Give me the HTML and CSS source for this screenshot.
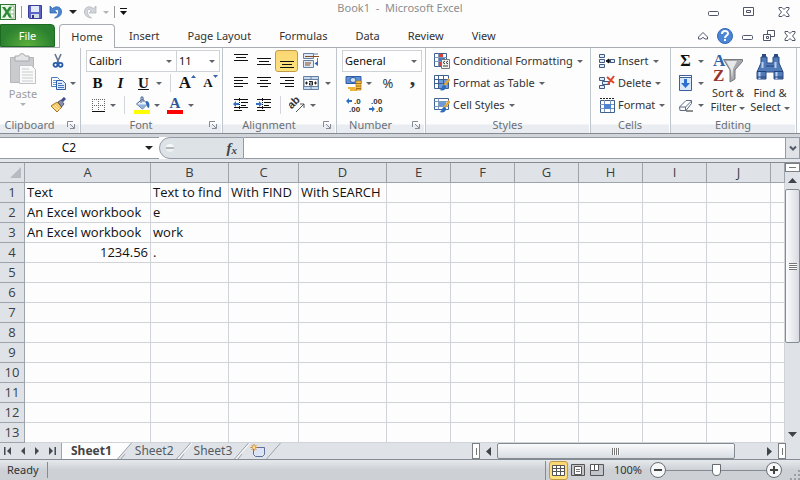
FILE: index.html
```html
<!DOCTYPE html>
<html lang="en">
<head>
<meta charset="utf-8">
<title>Book1 - Microsoft Excel</title>
<link rel="stylesheet" href="styles.css">
</head>
<body>
<header class="titlebar">
  <div class="quick">
    <svg class="logo" width="16" height="16" viewBox="0 0 16 16"><rect x=".5" y=".5" width="15" height="15" fill="#eaf5e6" stroke="#2c7a33"/><path d="M10 2h4v12h-4zM10 6h4M10 10h4" fill="#fff" stroke="#8abb85"/><path d="M2 3h3l2 3 2-3h3L8.500 8l3.500 5.500H9L7 10l-2 3.500H2L5.500 8z" fill="#2b8a35"/></svg>
    <i class="bar"></i>
    <button aria-label="Save"><svg width="16" height="16" viewBox="0 0 16 16"><path d="M1.500 1.500h13v13h-12l-1-1z" fill="#5b64c4" stroke="#3b3f9b"/><path d="M4 2h8v6H4z" fill="#e3eafa"/><path d="M4 10h8v4H4z" fill="#d6dbe8"/><path d="M5 11h2v3H5z" fill="#30357e"/></svg></button>
    <button aria-label="Undo"><svg width="16" height="16" viewBox="0 0 16 16"><path d="M2 2v7h7L6.800 6.700C9 4.500 11 5.500 10.500 8.500 10.200 11 8.500 12.500 6.500 14 12 13.500 14 10 13.500 7 13 2.500 8 1.500 4.500 4.500z" fill="#4a86d0" stroke="#2c60ab" stroke-width=".7"/></svg></button>
    <i class="caret black"></i>
    <button aria-label="Redo" disabled><svg width="16" height="16" viewBox="0 0 16 16"><path d="M14 2v7H7l2.200-2.300C7 4.500 5 5.500 5.500 8.500 5.800 11 7.500 12.500 9.500 14 4 13.500 2 10 2.500 7 3 2.500 8 1.500 11.500 4.500z" fill="#d2d5da" stroke="#aeb2b8" stroke-width=".7"/></svg></button>
    <i class="caret pale"></i>
    <i class="bar"></i>
    <button class="more" aria-label="Customize toolbar"><svg width="8" height="8" viewBox="0 0 8 8"><path d="M0 0h7v1H0zM0 3h7L3.500 7z" fill="#111"/></svg></button>
  </div>
  <h1>Book1&nbsp; -&nbsp; Microsoft Excel</h1>
  <div class="wincontrols">
    <button aria-label="Minimize"><svg width="12" height="12" viewBox="0 0 12 12"><rect x=".5" y="5.500" width="10" height="4" rx="1" fill="#fff" stroke="#50556a"/></svg></button>
    <button aria-label="Maximize"><svg width="12" height="12" viewBox="0 0 12 12"><path d="M.5 1.500h10v8H.5zM3.500 4.500h4v2h-4z" fill="#fff" stroke="#50556a"/></svg></button>
    <button aria-label="Close"><svg width="12" height="12" viewBox="0 0 12 12"><use href="#close"/></svg></button>
  </div>
</header>

<nav class="tabs">
  <button class="file">File</button>
  <button class="active">Home</button>
  <button>Insert</button>
  <button>Page Layout</button>
  <button>Formulas</button>
  <button>Data</button>
  <button>Review</button>
  <button>View</button>
  <div class="bookcontrols">
    <button aria-label="Collapse ribbon"><svg width="10" height="10" viewBox="0 0 10 10"><path d="M.5 6 5 1.500 9.500 6v2H7L5 6.300 3 8H.5z" fill="#fff" stroke="#50556a"/></svg></button>
    <button aria-label="Help"><svg width="16" height="16" viewBox="0 0 16 16"><circle cx="8" cy="8" r="7.500" fill="#4a86d6" stroke="#3267b5"/><path d="M5 6c0-4 6-4 6-.5C11 7.500 8 7.500 8 10" fill="none" stroke="#fff" stroke-width="2"/><path d="M7 11h2v2H7z" fill="#fff"/></svg></button>
    <button aria-label="Minimize workbook"><svg width="12" height="12" viewBox="0 0 12 12"><rect x=".5" y="5.500" width="10" height="4" rx="1" fill="#fff" stroke="#50556a"/></svg></button>
    <button aria-label="Restore workbook"><svg width="12" height="12" viewBox="0 0 12 12"><path d="M4.500.5h7v6h-7z" fill="#fff" stroke="#50556a"/><path d="M.5 4.500h7v6h-7zM3.500 6.500h2v2h-2z" fill="#fff" stroke="#50556a"/></svg></button>
    <button aria-label="Close workbook"><svg width="12" height="12" viewBox="0 0 12 12"><path id="close" d="M1 1.500h3l2 2 2-2h3v1.500L8.500 6 11 9v1.500H8l-2-2-2 2H1V9l2.500-3L1 3z" fill="#fff" stroke="#50556a"/></svg></button>
  </div>
</nav>

<main class="ribbon">
  <section class="group">
    <div class="body clip">
      <button class="big" disabled><svg width="28" height="32" viewBox="0 0 28 32"><path d="M1.500 4.500h23v25h-23z" fill="#c9cbcf" stroke="#b4b6ba"/><path d="M6 3h4c0-3 6-3 6 0h4v5H6z" fill="#e4e5e7" stroke="#a7a9ad"/><path d="M10.500 12.500h12l4 4v14h-16z" fill="#fafafa" stroke="#c0c2c6"/><path d="M13 16h7M13 19h11M13 22h11M13 25h11M13 28h11" stroke="#c8cacd"/></svg><span>Paste</span><i class="caret pale"></i></button>
      <div class="rows">
        <div class="row"><button class="icon" aria-label="Cut"><svg width="16" height="16" viewBox="0 0 16 16"><path d="M5 1l4 9M11 1 7 10" stroke="#66748c" stroke-width="1.600" fill="none"/><circle cx="5.500" cy="11.800" r="2" fill="none" stroke="#285dab" stroke-width="1.800"/><circle cx="10.500" cy="11.800" r="2" fill="none" stroke="#285dab" stroke-width="1.800"/></svg></button></div>
        <div class="row"><button class="icon" aria-label="Copy"><svg width="16" height="16" viewBox="0 0 16 16"><path d="M1.500 2.500h6l2 2v7h-8z" fill="#fff" stroke="#4c7cc0"/><path d="M3 5.500h5M3 7.500h4M3 9.500h4" stroke="#6c9ad4"/><path d="M6.500 5.500h6l3 3v6h-9z" fill="#dce9fa" stroke="#2f5fac"/><path d="M8 8.500h4M8 10.500h6M8 12.500h6" stroke="#4477be"/></svg></button><i class="caret"></i></div>
        <div class="row"><button class="icon" aria-label="Format Painter"><svg width="16" height="16" viewBox="0 0 16 16"><path d="M1 9l6-4 5 5-5 5z" fill="#f2c868" stroke="#a87828"/><path d="M3 9.500l5 4M5 8l4.500 4.500" stroke="#fff0b8"/><path d="M8 5l3-2 3 4-2.500 3z" fill="#8b8fa6" stroke="#555b78"/><path d="M12 4l3-3" stroke="#3d4a90" stroke-width="3"/></svg></button></div>
      </div>
    </div>
    <h2>Clipboard<svg width="8" height="8"><use href="#launch"/></svg></h2>
  </section>

  <section class="group">
    <div class="body rows">
      <div class="row fields">
        <label class="combo fontname"><select aria-label="Font"><option>Calibri</option></select></label><label class="combo fontsize"><select aria-label="Font size"><option>11</option></select></label>
      </div>
      <div class="row"><button class="icon serif">B</button><button class="icon serif italic">I</button><button class="icon serif under">U</button><i class="caret"></i><i class="sep"></i><button class="icon serif grow" aria-label="Grow font">A<svg width="5" height="3"><path d="M0 3 2.500 0 5 3z" fill="#3a62a8"/></svg></button><button class="icon serif shrink" aria-label="Shrink font">A<svg width="5" height="3"><path d="M0 0h5L2.500 3z" fill="#3a62a8"/></svg></button></div>
      <div class="row"><button class="icon" aria-label="Borders"><svg width="16" height="16" viewBox="0 0 16 16"><path d="M2 2.500h13M2 8.500h13M2.500 2v11M8.500 2v11M14.500 2v11" stroke="#666" stroke-dasharray="1 1"/><path d="M2 14h13v1H2z" fill="#111"/></svg></button><i class="caret"></i><i class="sep"></i><button class="icon" aria-label="Fill color"><svg width="16" height="18" viewBox="0 0 16 18"><path d="M2.500 8l6-5 5 5-5 5z" fill="#e7eff9" stroke="#47638f"/><path d="M3 8.500h10l-5 4z" fill="#8fb3df"/><path d="M7 7V1h2v5" fill="none" stroke="#47638f"/><path d="M12 5c3 0 4 3 3 7-2 0-2-3-3-5z" fill="#2e65b4"/><path d="M0 14h16v4H0z" fill="#ff0"/></svg></button><i class="caret"></i><button class="icon fontcolor" aria-label="Font color">A</button><i class="caret"></i></div>
    </div>
    <h2>Font<svg width="8" height="8"><use href="#launch"/></svg></h2>
  </section>

  <section class="group">
    <div class="body rows align">
      <div class="row"><button class="icon" aria-label="Top align"><svg width="16" height="16" viewBox="0 0 16 16"><path d="M1 1.500h14M3 4.500h10M1 7.500h14" stroke="#111"/></svg></button><button class="icon" aria-label="Middle align"><svg width="16" height="16" viewBox="0 0 16 16"><path d="M1 5.500h14M3 8.500h10M1 11.500h14" stroke="#111"/></svg></button><button class="icon on" aria-label="Bottom align"><svg width="16" height="16" viewBox="0 0 16 16"><path d="M1 8.500h14M3 11.500h10M1 14.500h14" stroke="#111"/></svg></button><button class="icon wide" aria-label="Wrap text"><svg width="16" height="16" viewBox="0 0 16 16"><path d="M.5.500h10v5H.5z" fill="#dde8f5" stroke="#67809f"/><path d="M2 3.500h14" stroke="#8a4b20"/><path d="M.5 7.500h10v7H.5z" fill="#dde8f5" stroke="#67809f"/><path d="M2 10h6M2 12h5" stroke="#8a4b20"/><path d="M11 1h4M14.500 5v5" stroke="#67809f"/><path d="M11.500 10.500 15 8v5z" fill="#2c65b5"/></svg></button></div>
      <div class="row"><button class="icon" aria-label="Align left"><svg width="16" height="16" viewBox="0 0 16 16"><path d="M1 2.500h14M1 5.500h9M1 8.500h14M1 11.500h9" stroke="#111"/></svg></button><button class="icon" aria-label="Center"><svg width="16" height="16" viewBox="0 0 16 16"><path d="M1 2.500h14M4 5.500h8M1 8.500h14M4 11.500h8" stroke="#111"/></svg></button><button class="icon" aria-label="Align right"><svg width="16" height="16" viewBox="0 0 16 16"><path d="M1 2.500h14M6 5.500h9M1 8.500h14M6 11.500h9" stroke="#111"/></svg></button><button class="icon wide" aria-label="Merge and center"><svg width="16" height="16" viewBox="0 0 16 16"><path d="M.5 1.500h15v13H.5z" fill="#c5daf0" stroke="#67809f"/><path d="M8 1v13" stroke="#67809f"/><path d="M1 4.500h14v7H1z" fill="#fff" stroke="#67809f"/><path d="M2 8h3M11 8h3M3.500 6.500v3M12.500 6.500v3" stroke="#222"/><path d="M6 6.500h3.500v3.500H6.500V8h3" stroke="#222" fill="none"/></svg></button><i class="caret"></i></div>
      <div class="row"><button class="icon" aria-label="Decrease indent"><svg width="16" height="16" viewBox="0 0 16 16"><path d="M1 2.500h14M8 5.500h7M8 8.500h5M1 10.500h14M1 13.500h8" stroke="#111"/><path d="M6.500 1v14" stroke="#111" stroke-dasharray="1 1"/><path d="M0 7l3-3v2h3v2H3v2z" fill="#2f6fc6"/></svg></button><button class="icon" aria-label="Increase indent"><svg width="16" height="16" viewBox="0 0 16 16"><path d="M1 2.500h14M8 5.500h7M8 8.500h5M1 10.500h14M1 13.500h8" stroke="#111"/><path d="M6.500 1v14" stroke="#111" stroke-dasharray="1 1"/><path d="M6 7 3 4v2H0v2h3v2z" fill="#2f6fc6"/></svg></button><i class="sep"></i><button class="icon" aria-label="Orientation"><svg width="18" height="16" viewBox="0 0 18 16"><text x="1" y="9" transform="rotate(-45 6 9)" font-family="Liberation Sans" font-weight="bold" font-size="11" fill="#333">ab</text><path d="M7 15l8-8M15 11V7h-4" fill="none" stroke="#555"/></svg></button><i class="caret"></i></div>
    </div>
    <h2>Alignment<svg width="8" height="8"><use href="#launch"/></svg></h2>
  </section>

  <section class="group">
    <div class="body rows">
      <div class="row fields"><label class="combo numfmt"><select aria-label="Number format"><option>General</option></select></label></div>
      <div class="row"><button class="icon" aria-label="Accounting format"><svg width="18" height="16" viewBox="0 0 18 16"><path d="M1 1.500h15v7H1z" fill="#5e8fd2" stroke="#2d5ca3"/><ellipse cx="8" cy="5" rx="3" ry="2.500" fill="#d2e2f6" stroke="#2d5ca3"/><path d="M3 12h7v2H3zM5 14h7v2H5z" fill="#eeb53b"/><path d="M11 6h5v9h-5z" fill="#f5c64f" stroke="#b87916" stroke-width=".7"/><path d="M11 8.500h5M11 11h5M11 13.500h5" stroke="#a96c12"/></svg></button><i class="caret"></i><button class="icon percent">%</button><button class="icon comma">,</button></div>
      <div class="row"><button class="icon dec" aria-label="Increase decimal"><svg width="16" height="16" viewBox="0 0 16 16"><path d="M0 4l3-3v2h3v2H3v2z" fill="#2f6fc6"/><text x="8" y="7">.0</text><text x="3" y="15">.00</text></svg></button><button class="icon dec" aria-label="Decrease decimal"><svg width="16" height="16" viewBox="0 0 16 16"><path d="M6 12 3 9v2H0v2h3v2z" fill="#2f6fc6"/><text x="2" y="7">.00</text><text x="7" y="15">.0</text></svg></button></div>
    </div>
    <h2>Number<svg width="8" height="8"><path id="launch" d="M.5 6V.500H6M3 3l4 4M7.500 3v4.500H3" fill="none" stroke="#858b94"/></svg></h2>
  </section>

  <section class="group">
    <div class="body rows">
      <button class="row text"><svg width="16" height="16" viewBox="0 0 16 16"><path d="M.5.500h12v13H.5z" fill="#fff" stroke="#3f5f91"/><path d="M4.500.5v13M.5 4.500h12M.5 8.500h12" stroke="#7f99bd"/><path d="M5 1h4v3H5zM5 9h3v4H5z" fill="#d94334"/><path d="M5 5h6v3H5z" fill="#4876bd"/><path d="M7.500 6.500h8v9h-8z" fill="#f7f7f7" stroke="#777"/><path d="M11 8l-2 1.500 2 1.500M14 8l-2 1.500L14 11M9 13h5" fill="none" stroke="#333"/></svg>Conditional Formatting<i class="caret"></i></button>
      <button class="row text"><svg width="16" height="16" viewBox="0 0 16 16"><path d="M.5.500h14v13H.5z" fill="#fff" stroke="#3f5f91"/><path d="M4 4h10v9H4z" fill="#6d9ad8"/><path d="M4.500.5v13M9.500.5v13M.5 4.500h14M.5 8.500h14" stroke="#3f5f91"/><path d="M15.500 4 10 11" stroke="#e5a838" stroke-width="2.500"/><path d="M10.500 10c-3 0-2 4-5 5 4 1.500 7-1 6.500-4z" fill="#2d6ac0"/></svg>Format as Table<i class="caret"></i></button>
      <button class="row text"><svg width="16" height="16" viewBox="0 0 16 16"><path d="M.5 1.500h14v11H.5z" fill="#fff" stroke="#3f5f91"/><path d="M4 5h8v4H4z" fill="#6d9ad8"/><path d="M.5 4.500h14M.5 9.500h14M4.500 1.500v11" stroke="#7f99bd"/><path d="M15.500 4 10 11" stroke="#e5a838" stroke-width="2.500"/><path d="M10.500 10c-3 0-2 4-5 5 4 1.500 7-1 6.500-4z" fill="#2d6ac0"/></svg>Cell Styles<i class="caret"></i></button>
    </div>
    <h2>Styles</h2>
  </section>

  <section class="group">
    <div class="body rows">
      <button class="row text"><svg width="16" height="16" viewBox="0 0 16 16"><path d="M.5 1.500h5v3h-5zM.5 6.500h5v3h-5zM.5 11.500h5v3h-5zM11 6.500h4.500v3H11z" fill="#e3edf9" stroke="#405b84"/><path d="M7 8l3-2v4zM10 8h2" fill="#111" stroke="#111"/></svg>Insert<i class="caret"></i></button>
      <button class="row text"><svg width="16" height="16" viewBox="0 0 16 16"><path d="M.5 2.500h5v3h-5zM.5 10.500h5v3h-5zM3.500 6.500h7v3h-7z" fill="#e3edf9" stroke="#405b84"/><path d="M8 2l7 6M15 1 9 9" stroke="#e0452b" stroke-width="2"/></svg>Delete<i class="caret"></i></button>
      <button class="row text"><svg width="16" height="16" viewBox="0 0 16 16"><path d="M1.500 3.500h14v12h-14z" fill="#fff" stroke="#3f5f91"/><path d="M5.500 3v12M11.500 3v12M1 7.500h14M1 11.500h14" stroke="#7f99bd"/><path d="M5 7h7v5H5z" fill="#4d85d4"/><path d="M1 1.500h14" stroke="#222" stroke-dasharray="2 1"/></svg>Format<i class="caret"></i></button>
    </div>
    <h2>Cells</h2>
  </section>

  <section class="group">
    <div class="body edit">
      <div class="rows">
        <div class="row"><button class="icon sigma" aria-label="AutoSum">Σ</button><i class="caret"></i></div>
        <div class="row"><button class="icon" aria-label="Fill"><svg width="14" height="16" viewBox="0 0 14 16"><path d="M.5.500h12v15H.5z" fill="#d9e8fb" stroke="#3c5f98"/><path d="M.5.500h12v2H.5z" fill="#fff" stroke="#3c5f98"/><path d="M5 4h3v4h3l-4.500 5L2 8h3z" fill="#2d6fd0"/></svg></button><i class="caret"></i></div>
        <div class="row"><button class="icon" aria-label="Clear"><svg width="16" height="14" viewBox="0 0 16 14"><path d="M1.500 9 8 2.500h5.500v3L8 12.500H2z" fill="#fff" stroke="#5b6b8a"/><path d="M2 9h5.500l6-6M7.500 9v3.500" fill="none" stroke="#5b6b8a"/><path d="M8 13h7" stroke="#222"/></svg></button><i class="caret"></i></div>
      </div>
      <button class="big"><svg width="30" height="30" viewBox="0 0 30 30"><path d="M10.500 6.500h19v2L22 17v9l-5 3V17z" fill="#a4a7ab" stroke="#77797d"/><path d="M13 8h11l-4 8-1 10-1-9z" fill="#e7e8e9"/><text x="0" y="13" class="glyph" fill="#2f62ac">A</text><text x="0" y="28" class="glyph" fill="#97352e">Z</text></svg><span>Sort &amp;<br>Filter <i class="caret"></i></span></button>
      <button class="big"><svg width="28" height="30" viewBox="0 0 28 30"><path d="M5 4h6v6h6V4h6v6l4 9v7h-9v-7h-8v7H1v-7l4-9z" fill="#517ab8" stroke="#2a4a82"/><path d="M6.500 9v6M19.500 9v6M3.500 19v7M20.500 19v7" stroke="#b7d0f0" stroke-width="2"/><path d="M1 18.500h9M18 18.500h9M10 13h8M1 24h9M18 24h9" stroke="#24417a"/><path d="M6 2.500h4M18 2.500h4" stroke="#2a4a82" stroke-width="3"/></svg><span>Find &amp;<br>Select <i class="caret"></i></span></button>
    </div>
    <h2>Editing</h2>
  </section>
</main>

<div class="formulabar">
  <label class="namebox"><input aria-label="Name box" value="C2"><i class="caret black"></i></label>
  <div class="fx"><i class="knob"></i><button aria-label="Insert function">f<small>x</small></button></div>
  <input class="formula" aria-label="Formula">
  <button class="expand" aria-label="Expand formula bar"><svg width="8" height="7" viewBox="0 0 8 7"><path d="M1 1.500 4 4.500l3-3" fill="none" stroke="#555b66" stroke-width="2"/></svg></button>
</div>

<div class="workspace">
  <div class="sheet">
    <table>
      <colgroup><col class="col-head"><col class="col-a"><col class="col-b"><col class="col-c"><col class="col-d"><col class="col-std"><col class="col-std"><col class="col-std"><col class="col-std"><col class="col-std"><col class="col-std"><col></colgroup>
      <thead><tr><th><svg class="corner" width="11" height="11"><path d="M11 0v11H0z" fill="#b6bbc1"/></svg></th><th>A</th><th>B</th><th>C</th><th>D</th><th>E</th><th>F</th><th>G</th><th>H</th><th>I</th><th>J</th><th></th></tr></thead>
      <tbody id="rows"></tbody>
    </table>
  </div>
  <div class="vscroll">
    <button class="splitter" aria-label="Split"></button>
    <button class="arrow" aria-label="Scroll up"><svg width="9" height="5"><path d="M0 5 4.500 0 9 5z" fill="#3f434a"/></svg></button>
    <div class="thumb"><i></i></div>
    <button class="arrow end" aria-label="Scroll down"><svg width="9" height="5"><path d="M0 0h9L4.500 5z" fill="#3f434a"/></svg></button>
  </div>
</div>

<div class="sheetbar">
  <div class="sheetnav">
    <button aria-label="First sheet"><svg width="8" height="8"><path d="M0 0h1.500v8H0zM7 0v8L3 4z" fill="#454a52"/></svg></button>
    <button aria-label="Previous sheet"><svg width="8" height="8"><path d="M6 0v8L2 4z" fill="#454a52"/></svg></button>
    <button aria-label="Next sheet"><svg width="8" height="8"><path d="M2 0v8l4-4z" fill="#454a52"/></svg></button>
    <button aria-label="Last sheet"><svg width="8" height="8"><path d="M6.500 0H8v8H6.500zM1 0v8l4-4z" fill="#454a52"/></svg></button>
  </div>
  <button class="sheettab current">Sheet1</button>
  <svg class="slant" width="16" height="16"><path d="M0 0h14L0 16z" fill="#fdfdfd"/><path d="M14.500 0 .500 16M4 16l4-5" stroke="#9da3ab" fill="none"/></svg>
  <button class="sheettab">Sheet2</button>
  <svg class="slant" width="16" height="16"><path d="M14.500 0 .500 16M4 16l4-5" stroke="#9da3ab" fill="none"/><path d="M16 0 2 16" stroke="#fff"/></svg>
  <button class="sheettab">Sheet3</button>
  <svg class="slant" width="16" height="16"><path d="M14.500 0 .500 16M4 16l4-5" stroke="#9da3ab" fill="none"/><path d="M16 0 2 16" stroke="#fff"/></svg>
  <button class="newsheet" aria-label="Insert worksheet"><svg width="16" height="14" viewBox="0 0 16 14"><path d="M3.500 3.500h11v7l-2 2h-7l-2-2z" fill="#dbe3f4" stroke="#5e6f9a"/><path d="M4 0v7M.5 3.500h7M1.500 1l5 5M6.500 1l-5 5" stroke="#d98218"/><circle cx="4" cy="3.500" r="1.300" fill="#ffe79a"/></svg></button>
  <svg class="slant" width="16" height="16"><path d="M14.500 0 .500 16" stroke="#9da3ab"/></svg>
  <div class="hscroll">
    <button class="splitter" aria-label="Resize tabs"></button>
    <button class="arrow" aria-label="Scroll left"><svg width="5" height="9"><path d="M5 0v9L0 4.500z" fill="#3f434a"/></svg></button>
    <div class="track"><div class="thumb"><i></i></div></div>
    <button class="arrow" aria-label="Scroll right"><svg width="5" height="9"><path d="M0 0v9l5-4.500z" fill="#3f434a"/></svg></button>
    <button class="splitter" aria-label="Split columns"></button>
  </div>
</div>

<footer class="status">
  <span class="ready">Ready</span>
  <div class="views">
    <button class="on" aria-label="Normal view"><svg width="13" height="11"><path d="M.5.500h12v10H.5zM4.500 0v11M8.500 0v11M0 3.500h13M0 6.500h13" fill="#fff" stroke="#555"/></svg></button>
    <button aria-label="Page layout view"><svg width="14" height="12"><path d="M.5.500h13v11H.5z" fill="#c2c5ca" stroke="#555"/><path d="M3.500 2.500h7v8h-7z" fill="#fff" stroke="#555"/><path d="M5 5.500h4M5 7.500h4" stroke="#777"/></svg></button>
    <button aria-label="Page break preview"><svg width="14" height="12"><path d="M.5.500h13v11H.5z" fill="#c2c5ca" stroke="#555"/><path d="M.5.500h4v6h-4zM4.500.5h4v6h-4z" fill="#fff" stroke="#555"/></svg></button>
  </div>
  <button class="percent100">100%</button>
  <button class="round" aria-label="Zoom out"><svg width="16" height="16"><circle cx="8" cy="8" r="7.500" fill="#f6f7f8" stroke="#686d75"/><path d="M4 8h8" stroke="#444" stroke-width="2"/></svg></button>
  <input class="zoom" type="range" min="0" max="100" value="50" aria-label="Zoom">
  <button class="round" aria-label="Zoom in"><svg width="16" height="16"><circle cx="8" cy="8" r="7.500" fill="#f6f7f8" stroke="#686d75"/><path d="M4 8h8M8 4v8" stroke="#444" stroke-width="2"/></svg></button>
  <svg class="grip" width="10" height="10"><path d="M8 0h2v2H8zM4 4h2v2H4zM8 4h2v2H8zM0 8h2v2H0zM4 8h2v2H4zM8 8h2v2H8z" fill="#9a9fa7"/></svg>
</footer>
<script src="sheet.js"></script>
</body>
</html>
```
FILE: styles.css
```css
* { box-sizing: border-box; }
body {
  margin: 0;
  height: 100vh;
  display: flex;
  flex-direction: column;
  overflow: hidden;
  background: #fdfdfd;
  color: #333;
  font: 11px/16px "Noto Sans", sans-serif;
}
button, input, select { font: inherit; color: inherit; border: 0; padding: 0; margin: 0; background: none; }
button { display: flex; align-items: center; justify-content: center; white-space: nowrap; }
svg { display: block; flex: none; }

.caret {
  flex: none;
  display: inline-block;
  border: 3px solid transparent;
  border-top-color: #5f646b;
  border-bottom: 0;
}
.caret.black { border-width: 4px 4px 0; border-top-color: #222; }
.caret.pale { border-top-color: #b0b3b8; }

.titlebar { display: grid; grid-template-columns: 1fr auto 1fr; align-items: center; height: 24px; flex: none; }
.quick { display: flex; align-items: center; gap: 5px; }
.quick .bar { width: 1px; height: 12px; background: #999; }
.titlebar h1 { margin: 0 0 8px; font-size: 11px; font-weight: 400; color: #8e8e8e; }
.wincontrols { display: flex; justify-content: flex-end; gap: 23px; padding-right: 10px; }

.tabs { display: flex; height: 24px; flex: none; border-bottom: 1px solid #a8abaf; }
.tabs > button { padding: 0 14px; height: 24px; }
.tabs .file { width: 55px; padding: 0; margin-right: 4px; height: 23px; color: #fff; border: 1px solid #1d6b22; border-radius: 0 4px 0 0; background: radial-gradient(ellipse at 50% 100%, #5cb03c, #2c8130 70%); }
.tabs .active { width: 56px; padding: 0; border: 1px solid #a8abaf; border-bottom: 0; border-radius: 4px 4px 0 0; background: #fdfdfd; }
.bookcontrols { display: flex; align-items: center; gap: 9px; margin-left: auto; padding-right: 4px; }

.ribbon { display: grid; grid-template-columns: 81px 142px 114px 89px 165px 80px 126px 1fr; flex: none; border-bottom: 1px solid #858b93; }
.group { display: flex; flex-direction: column; padding-top: 2px; border-right: 1px solid #bfc5cd; }
.body { display: flex; height: 66px; }
.rows { display: flex; flex-direction: column; }
.body.rows { padding-left: 5px; }
.body.align { padding-left: 6px; }
.row { display: flex; align-items: center; height: 22px; }
.group h2 { position: relative; margin: 0; height: 17px; padding: 1px 20px 0 0; text-align: center; font-size: 11px; line-height: 16px; font-weight: 400; color: #6a7078; background: linear-gradient(#fdfdfd 45%, #e9ecf0 55%); border-right: 1px solid #fff; }
.group h2:not(:has(svg)) { padding: 1px 0 0; }
.group h2 svg { position: absolute; right: 4px; top: 5px; }
.icon { width: 23px; height: 22px; flex: none; }
.icon + .caret { margin: 0 3px 0 1px; }
.icon.wide { width: 26px; }
.icon.on, .views .on { border: 1px solid #c39a45; border-radius: 3px; background: linear-gradient(#fbd774, #ffe37e); }
.sep { width: 1px; height: 18px; margin: 0 5px; background: #d2d5d9; }
.text { gap: 3px; padding-left: 3px; justify-content: flex-start; text-align: left; }
.text .caret { margin-left: 1px; }
.big { flex: none; flex-direction: column; justify-content: flex-start; width: 42px; padding-top: 3px; line-height: 14px; }
.big:disabled { color: #9b9b9b; gap: 2px; }
.clip .big { width: 46px; }
.edit { padding-left: 3px; }
.edit .big { gap: 3px; }
.big .caret { vertical-align: middle; }

.combo { position: relative; display: block; height: 22px; border: 1px solid #cfd2d6; background: #fff; }
.combo + .combo { margin-left: -1px; }
.combo select { width: 100%; height: 20px; padding-left: 2px; appearance: none; color: #111; outline: 0; }
.combo::after { content: ""; position: absolute; right: 4px; top: 9px; border: 3px solid transparent; border-top-color: #5f646b; border-bottom: 0; pointer-events: none; }
.fontname { width: 91px; }
.fontsize { width: 44px; }
.numfmt { width: 80px; }

.serif { font: bold 15px/18px "Liberation Serif", serif; color: #111; }
.italic { font-style: italic; }
.under { text-decoration: underline; }
.grow { font-size: 17px; }
.grow svg { align-self: flex-start; margin-top: 3px; }
.shrink { font-size: 13px; }
.shrink svg { align-self: flex-start; margin-top: 3px; }
.fontcolor { height: 18px; border-bottom: 4px solid #f00; width: 16px; margin: 0 4px; font: bold 15px/14px "Liberation Serif", serif; color: #2f5597; }
.icon.fontcolor + .caret { margin-left: 1px; }
.percent { width: 26px; font-size: 13px; }
.comma { font: bold 22px/10px "Liberation Serif", serif; padding-bottom: 10px; }
.dec text { font: bold 8px "Liberation Sans", sans-serif; fill: #333; }
.sigma { font: bold 16px/18px "Liberation Serif", serif; color: #111; }
.glyph { font: bold 17px "Liberation Serif", serif; }

.formulabar { display: flex; flex: none; height: 28px; border-top: 3px solid #d1d5da; border-bottom: 3px solid #e3e6ea; background: #fff; }
.namebox { display: flex; align-items: center; width: 159px; padding-right: 6px; border-top: 1px solid #959ba5; border-bottom: 1px solid #959ba5; }
.namebox input { flex: 1; min-width: 0; padding-right: 7px; text-align: center; font-size: 12px; color: #111; }
.fx { display: flex; align-items: center; justify-content: space-between; width: 85px; padding: 0 6px; border: 1px solid #959ba5; border-radius: 12px 0 0 12px; background: #dde2e7; }
.knob { width: 8px; height: 8px; border-radius: 50%; background: linear-gradient(#f7f8f9 40%, #b5bac1 40%, #b5bac1 60%, #eef0f2 60%); }
.fx button { font: italic bold 15px/16px "Liberation Serif", serif; color: #444; }
.fx small { font-size: 11px; padding-top: 4px; }
.formula { flex: 1; min-width: 0; border-top: 1px solid #959ba5; border-bottom: 1px solid #959ba5; }
.expand { width: 15px; border: 1px solid #959ba5; background: #dfe3e8; }

.workspace { display: flex; flex: 1; min-height: 0; }
.sheet { flex: 1; min-width: 0; overflow: hidden; border-top: 1px solid #858b93; }
table { width: 100%; table-layout: fixed; border-collapse: separate; border-spacing: 0; font: 13px/19px "Open Sans", sans-serif; color: #111; }
.col-head { width: 25px; }
.col-a { width: 126px; }
.col-b { width: 78px; }
.col-c { width: 70px; }
.col-d { width: 88px; }
.col-std { width: 64px; }
th, td { height: 20px; padding: 0 2px; border-right: 1px solid #d0d4d9; border-bottom: 1px solid #d0d4d9; white-space: nowrap; }
th { padding: 0; font-weight: 400; color: #3b3e42; background: #dfe3e8; border-color: #9ea4ac; }
.corner { margin-left: 10px; }
.num { text-align: right; }

.vscroll { display: flex; flex-direction: column; width: 15px; background: #dfe3e8; border-top: 1px solid #858b93; }
.splitter { border: 1px solid #7c7f84; background: #fff; }
.vscroll .splitter { height: 9px; }
.splitter::before { content: ""; background: #777; }
.vscroll .splitter::before { width: 7px; height: 1px; }
.vscroll .arrow { height: 17px; }
.vscroll .end { margin-top: auto; }
.thumb { display: flex; align-items: center; justify-content: center; border: 1px solid #858b93; border-radius: 2px; }
.vscroll .thumb { flex: 0 0 55%; background: linear-gradient(90deg, #fbfcfd, #d7dbe1); }
.thumb i { width: 8px; height: 7px; background: repeating-linear-gradient(#777 0 1px, #fff 1px 2px); }

.sheetbar { display: flex; flex: none; height: 17px; background: #dfe3e8; border-bottom: 1px solid #858b93; }
.sheetnav { display: flex; align-items: center; justify-content: space-between; width: 62px; padding: 0 5px 0 4px; border-right: 1px solid #9ea4ac; }
.sheettab { padding: 0 2px; height: 16px; font-size: 12px; color: #555b63; }
.current { padding: 0 5px 0 9px; font-weight: 700; background: #fdfdfd; color: #444; }
.newsheet { height: 16px; }
.hscroll { display: flex; margin-left: auto; width: 41%; padding-right: 14px; }
.hscroll .splitter { width: 8px; }
.hscroll .splitter::before { width: 1px; height: 7px; }
.hscroll .arrow { width: 17px; }
.track { flex: 1; display: flex; }
.hscroll .thumb { width: 90%; background: linear-gradient(#f9fafb, #d9dde3); }
.hscroll .thumb i { background: repeating-linear-gradient(90deg, #777 0 1px, #fff 1px 2px); }

.status { display: flex; align-items: center; flex: none; height: 20px; background: linear-gradient(#e6e9ec, #cdd1d6 50%); }
.ready { width: 48px; padding-left: 7px; border-right: 1px solid #858b93; }
.views { display: flex; align-items: center; margin-left: auto; padding-left: 3px; border-left: 1px solid #858b93; }
.views button { width: 19px; height: 19px; }
.percent100 { width: 44px; }
.round { width: 16px; }
.zoom { appearance: none; width: 100px; height: 16px; background: linear-gradient(#858b93, #858b93) center / 100% 1px no-repeat; }
.zoom::-webkit-slider-thumb { appearance: none; width: 9px; height: 12px; border: 1px solid #666b73; border-radius: 1px 1px 5px 5px; background: #fff; }
.grip { align-self: flex-end; margin-left: 8px; }
```
FILE: sheet.js
```js
const data = [
  ["Text", "Text to find", "With FIND", "With SEARCH"],
  ["An Excel workbook", "e"],
  ["An Excel workbook", "work"],
  ["1234.56", "."]
];
const body = document.getElementById("rows");
for (let r = 0; r < 13; r++) {
  const tr = body.insertRow();
  const head = document.createElement("th");
  head.textContent = r + 1;
  tr.append(head);
  for (let c = 0; c < 11; c++) {
    const value = (data[r] || [])[c] || "";
    const td = tr.insertCell();
    td.textContent = value;
    if (/^\d/.test(value)) td.className = "num";
  }
}
```
